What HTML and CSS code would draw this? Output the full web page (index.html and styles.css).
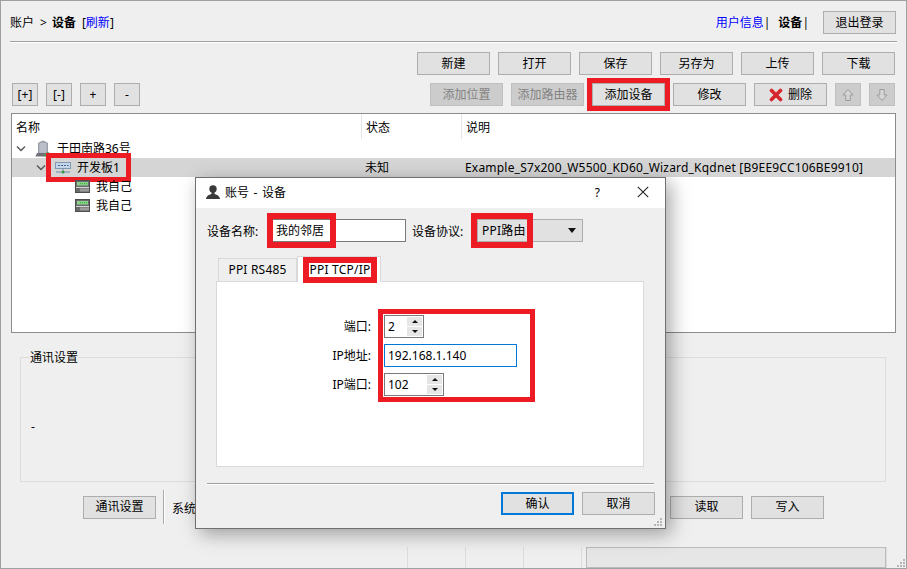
FILE: index.html
```html
<!DOCTYPE html>
<html lang="zh">
<head>
<meta charset="utf-8">
<title>账户 - 设备</title>
<link rel="stylesheet" href="styles.css">
</head>
<body>
<div class="window">
  <header class="header">
    <div class="crumbs"><span>账户</span><span>&gt;</span><b>设备</b><span>[<span class="link">刷新</span>]</span></div>
    <div class="user">
      <span class="nav"><span><span class="link">用户信息</span>|</span><span><b>设备</b>|</span></span>
      <button class="btn">退出登录</button>
    </div>
  </header>

  <div class="toolbar toolbar-end">
    <button class="btn">新建</button>
    <button class="btn">打开</button>
    <button class="btn">保存</button>
    <button class="btn">另存为</button>
    <button class="btn">上传</button>
    <button class="btn">下载</button>
  </div>

  <div class="toolbar toolbar-split">
    <div class="group-btns">
      <button class="btn small">[+]</button>
      <button class="btn small">[-]</button>
      <button class="btn small">+</button>
      <button class="btn small">-</button>
    </div>
    <div class="group-btns">
      <button class="btn off">添加位置</button>
      <button class="btn off">添加路由器</button>
      <button class="btn mark">添加设备</button>
      <button class="btn">修改</button>
      <button class="btn">
        <svg class="ico-x" width="14" height="14" viewBox="0 0 14 14"><path d="M2.500 2.500 L11.500 11.500 M11.500 2.500 L2.500 11.500" stroke="#d5262b" stroke-width="3.6" stroke-linecap="round"/></svg>删除</button>
      <button class="btn small off">
        <svg width="14" height="14" viewBox="0 0 14 14"><path d="M7 1.500 L12 7 H9.200 V12.500 H4.800 V7 H2 Z" fill="#d6d6d6" stroke="#9c9c9c"/></svg>
      </button>
      <button class="btn small off">
        <svg width="14" height="14" viewBox="0 0 14 14"><path d="M7 12.500 L12 7 H9.200 V1.500 H4.800 V7 H2 Z" fill="#d6d6d6" stroke="#9c9c9c"/></svg>
      </button>
    </div>
  </div>

  <section class="tree">
    <div class="tree-head">
      <div class="col-name">名称</div>
      <div class="col-state">状态</div>
      <div class="col-desc">说明</div>
    </div>
    <div class="tree-row">
      <div class="cell-name lvl0">
        <svg class="chev" width="12" height="8" viewBox="0 0 12 8"><path d="M2 1.500 L6 5.500 L10 1.500" fill="none" stroke="#555" stroke-width="1.400"/></svg>
        <svg class="ico" width="17" height="17" viewBox="0 0 17 17"><path d="M3.500 13 V3 L8 1 L12.500 3 V13 Z" fill="#a3a7b3" stroke="#83868f" stroke-width=".7"/><path d="M4.500 4 H11.500 M4.500 6 H11.500 M4.500 8 H11.500 M4.500 10 H11.500 M4.500 12 H11.500" stroke="#d4d7df"/><path d="M0.500 16.500 L2 13 H12 V16.500 Z" fill="#6f7177"/><path d="M9.500 16.500 V14 L13 12 L16.500 14 V16.500 Z" fill="#4da24d"/></svg>
        <span>于田南路36号</span>
      </div>
    </div>
    <div class="tree-row selected">
      <div class="cell-name lvl1">
        <svg class="chev" width="12" height="8" viewBox="0 0 12 8"><path d="M2 1.500 L6 5.500 L10 1.500" fill="none" stroke="#555" stroke-width="1.400"/></svg>
        <span class="tree-mark">
          <svg class="ico" width="16" height="13" viewBox="0 0 16 13"><rect x=".5" y="1.500" width="15" height="6" fill="#c5d6e8" stroke="#7f98b4"/><path d="M3 4.500 H5 M6 4.500 H8 M9 4.500 H11 M12 4.500 H13.500" stroke="#41668f" stroke-width="1.200"/><path d="M8 8 V11 M1 11 H15" stroke="#6d8aa8"/><circle cx="8" cy="11" r="1.500" fill="#3f9a45"/></svg>
          <span>开发板1</span>
        </span>
      </div>
      <div class="cell-state">未知</div>
      <div class="cell-desc">Example_S7x200_W5500_KD60_Wizard_Kqdnet [B9EE9CC106BE9910]</div>
    </div>
    <div class="tree-row">
      <div class="cell-name lvl2">
        <svg class="ico" width="15" height="13" viewBox="0 0 15 13"><rect x=".5" y=".5" width="14" height="12" fill="#6b6b6b" stroke="#4d4d4d"/><rect x="2" y="2" width="11" height="3.500" fill="#8fd28f"/><path d="M5 3.700 H13" stroke="#1fb61f" stroke-dasharray="1 1"/><rect x="1" y="7" width="13" height="1" fill="#d5d5d5"/><rect x="5" y="8.500" width="9" height="3" fill="#9a9a9a"/></svg>
        <span>我自己</span>
      </div>
    </div>
    <div class="tree-row">
      <div class="cell-name lvl2">
        <svg class="ico" width="15" height="13" viewBox="0 0 15 13"><rect x=".5" y=".5" width="14" height="12" fill="#6b6b6b" stroke="#4d4d4d"/><rect x="2" y="2" width="11" height="3.500" fill="#8fd28f"/><path d="M5 3.700 H13" stroke="#1fb61f" stroke-dasharray="1 1"/><rect x="1" y="7" width="13" height="1" fill="#d5d5d5"/><rect x="5" y="8.500" width="9" height="3" fill="#9a9a9a"/></svg>
        <span>我自己</span>
      </div>
    </div>
  </section>

  <fieldset class="comm">
    <legend>通讯设置</legend>
    <div class="comm-text">-</div>
  </fieldset>

  <div class="actions">
    <button class="btn">通讯设置</button>
    <span class="vline"></span>
    <span class="sys">系统</span>
    <div class="actions-right">
      <button class="btn">读取</button>
      <button class="btn">写入</button>
    </div>
  </div>

  <footer class="status">
    <span class="status-cell"></span>
    <span class="status-cell"></span>
    <span class="status-cell"></span>
    <span class="status-cell last"><span class="progress"></span></span>
    <svg class="grip" width="10" height="10" viewBox="0 0 10 10"><path d="M7 1h2v2h-2zM4 4h2v2h-2zM7 4h2v2h-2zM1 7h2v2h-2zM4 7h2v2h-2zM7 7h2v2h-2z" fill="#b5b5b5"/></svg>
  </footer>

  <div class="dialog">
    <div class="dlg-title">
      <svg class="dlg-ico" width="16" height="16" viewBox="0 0 16 16"><circle cx="8" cy="5" r="3.700" fill="#3a3a3a"/><path d="M6.500 8 V10 C4 11 1.500 11.500 1 15 H15 C14.500 11.500 12 11 9.500 10 V8 Z" fill="#3a3a3a"/></svg>
      <span class="dlg-name">账号 - 设备</span>
      <span class="dlg-help">?</span>
      <svg class="dlg-close" width="12" height="12" viewBox="0 0 12 12"><path d="M.8 .8 L11.200 11.200 M11.200 .8 L.8 11.200" stroke="#222" stroke-width="1.100"/></svg>
    </div>
    <div class="dlg-form">
      <label class="dlg-label">设备名称:</label>
      <span class="name-input"><span class="name-text">我的邻居</span></span>
      <label class="dlg-label proto">设备协议:</label>
      <span class="combo"><span class="combo-text latin">PPI路由</span><svg class="combo-arrow" width="8" height="5" viewBox="0 0 8 5"><path d="M0 0 H8 L4 5 Z" fill="#111"/></svg></span>
    </div>
    <div class="tabs">
      <span class="tab latin">PPI RS485</span>
      <span class="tab active"><span class="tab-mark latin">PPI TCP/IP</span></span>
    </div>
    <div class="pane">
      <div class="pane-labels">
        <span>端口:</span>
        <span>IP地址:</span>
        <span>IP端口:</span>
      </div>
      <div class="pane-fields">
        <span class="spin port"><span class="spin-val">2</span><span class="spin-btns"><i class="up"></i><i class="down"></i></span></span>
        <span class="ip">192.168.1.140</span>
        <span class="spin ipport"><span class="spin-val">102</span><span class="spin-btns"><i class="up"></i><i class="down"></i></span></span>
      </div>
    </div>
    <div class="dlg-sep"></div>
    <div class="dlg-actions">
      <button class="btn primary">确认</button>
      <button class="btn">取消</button>
    </div>
    <svg class="dlg-grip" width="9" height="9" viewBox="0 0 9 9"><path d="M6 0h2v2h-2zM3 3h2v2h-2zM6 3h2v2h-2zM0 6h2v2h-2zM3 6h2v2h-2zM6 6h2v2h-2z" fill="#b5b5b5"/></svg>
  </div>
</div>
</body>
</html>
```
FILE: styles.css
```css
* { box-sizing: border-box; }
html, body { margin: 0; padding: 0; }
body {
  width: 907px;
  height: 569px;
  overflow: hidden;
  font-family: "Noto Sans", "Noto Sans CJK SC", sans-serif;
  font-size: 12px;
  color: #000;
}
button { font: inherit; color: inherit; }
b { font-weight: 700; }
.link { color: #0000ff; }
.latin { letter-spacing: .2px; }

.window {
  position: relative;
  width: 907px;
  height: 569px;
  border: 1px solid #a0a0a0;
  background: #efefef;
  display: flex;
  flex-direction: column;
}

.btn {
  width: 73px;
  height: 23px;
  padding: 0;
  background: #e1e1e1;
  border: 1px solid #adadad;
  display: inline-flex;
  align-items: center;
  justify-content: center;
  line-height: 1;
}
.btn.small { width: 26px; }
.btn.off { background: #cccccc; border-color: #bfbfbf; color: #838383; }
.btn.mark { outline: 5px solid #ed1c24; }
.btn.primary { border: 2px solid #0078d7; }
.ico-x { margin-right: 5px; }

.header {
  height: 41px;
  margin: 0 9px;
  padding: 10px 1px 0 0;
  display: flex;
  justify-content: space-between;
  border-bottom: 1px solid #a0a0a0;
  box-shadow: 0 1px 0 #fff;
}
.crumbs { line-height: 23px; display: flex; gap: 6px; }
.crumbs b { margin-left: -1px; }
.user { display: flex; }
.nav { line-height: 23px; margin-right: 14px; display: flex; gap: 8px; }

.toolbar { display: flex; margin: 10px 11px 0 11px; }
.toolbar-end { justify-content: flex-end; gap: 8px; }
.toolbar-split { justify-content: space-between; margin-top: 8px; }
.group-btns { display: flex; gap: 8px; }

.tree {
  height: 220px;
  margin: 7px 10px 0 10px;
  border: 1px solid #8c8c8c;
  background: #fff;
}
.tree-head { display: flex; height: 25px; line-height: 27px; }
.col-name { width: 350px; padding-left: 4px; border-right: 1px solid #e5e5e5; }
.col-state { width: 100px; padding-left: 4px; border-right: 1px solid #e5e5e5; }
.col-desc { padding-left: 4px; }
.tree-row { display: flex; height: 19px; line-height: 19px; white-space: nowrap; }
.tree-row.selected { background: #d5d5d5; }
.cell-name { width: 350px; display: flex; align-items: center; padding-left: 3px; }
.cell-state { width: 100px; padding-left: 3px; }
.cell-desc { padding-left: 3px; letter-spacing: .2px; }
.lvl1 { padding-left: 23px; }
.lvl2 { padding-left: 63px; }
.chev { margin-right: 4px; flex: none; }
.ico { flex: none; margin-right: 6px; }
.lvl0 .chev { margin-right: 8px; }
.lvl0 .ico { margin-right: 5px; }
.tree-mark {
  display: flex;
  align-items: center;
  width: 75px;
  height: 19px;
  padding-left: 4px;
  outline: 5px solid #ed1c24;
}

.comm {
  height: 133px;
  margin: 16px 20px 0 19px;
  padding: 0 10px;
  border: 1px solid #dcdcdc;
  min-inline-size: 0;
}
.comm legend { padding: 0; margin-left: -1px; line-height: 17px; }
.comm-text { margin-top: 52px; }

.actions {
  height: 34px;
  margin-top: 8px;
  padding: 0 82px;
  display: flex;
  align-items: center;
}
.vline { width: 1px; height: 34px; margin: 0 8px 0 7px; background: #a8a8a8; box-shadow: 1px 0 0 #fff; }
.sys { line-height: 23px; margin-top: 2px; }
.actions-right { margin-left: auto; display: flex; gap: 8px; }

.status {
  margin-top: auto;
  height: 23px;
  display: flex;
  justify-content: flex-end;
  align-items: flex-end;
}
.status-cell { width: 58px; height: 21px; border-left: 1px solid #dcdcdc; }
.status-cell.last {
  width: 306px;
  border-right: 1px solid #dcdcdc;
  padding: 0 0 0 4px;
  margin-right: 9px;
}
.progress { display: block; width: 300px; height: 21px; background: #e6e6e6; border: 1px solid #bcbcbc; }
.grip { flex: none; }

.dialog {
  position: absolute;
  left: 194px;
  top: 176px;
  width: 471px;
  height: 352px;
  border: 1px solid #707070;
  background: #efefef;
  box-shadow: 5px 5px 18px rgba(0, 0, 0, .35);
  display: flex;
  flex-direction: column;
}
.dlg-title { height: 30px; padding: 0 0 2px 9px; background: #fff; display: flex; align-items: center; flex: none; }
.dlg-ico { margin-right: 4px; }
.dlg-name { flex: 1; word-spacing: 1.500px; }
.dlg-help { margin-right: 37px; }
.dlg-close { margin-right: 16px; }

.dlg-form { display: flex; align-items: center; height: 23px; margin: 11px 0 0 11px; flex: none; }
.dlg-label { width: 65px; }
.dlg-label.proto { margin-left: 6px; }
.name-input {
  width: 134px;
  height: 23px;
  background: #fff;
  border: 1px solid #7a7a7a;
}
.name-text { display: block; width: 57px; height: 23px; margin: -1px 0 0 0; padding-left: 3px; line-height: 23px; outline: 6px solid #ed1c24; }
.combo {
  width: 106px;
  height: 23px;
  background: #e1e1e1;
  border: 1px solid #adadad;
  display: flex;
  align-items: center;
  justify-content: space-between;
  padding-right: 6px;
}
.combo-text { display: block; width: 50px; height: 23px; margin: 0 0 0 -1px; padding-left: 5px; line-height: 23px; outline: 6px solid #ed1c24; }

.tabs { display: flex; align-items: flex-end; height: 24px; margin: 15px 0 0 22px; flex: none; }
.tab {
  width: 79px;
  height: 23px;
  line-height: 22px;
  text-align: center;
  border: 1px solid #d9d9d9;
  border-bottom: 0;
}
.tab.active {
  width: 84px;
  height: 26px;
  margin-bottom: -1px;
  background: #fff;
  padding: 6px 0 0 11px;
  position: relative;
}
.tab-mark { display: block; width: 62px; height: 14px; line-height: 14px; text-align: center; outline: 6px solid #ed1c24; }

.pane {
  width: 428px;
  height: 186px;
  margin-left: 20px;
  padding: 33px 0 0;
  background: #fff;
  border: 1px solid #d9d9d9;
  display: flex;
  align-items: flex-start;
  flex: none;
}
.pane-labels {
  width: 154px;
  margin-right: 12px;
  display: flex;
  flex-direction: column;
  gap: 6px;
  text-align: right;
}
.pane-labels span { height: 23px; line-height: 23px; }
.pane-fields {
  width: 147px;
  height: 83px;
  margin-top: -1px;
  padding: 1px;
  display: flex;
  flex-direction: column;
  align-items: flex-start;
  gap: 6px;
  outline: 5px solid #ed1c24;
}
.spin, .ip { height: 23px; line-height: 21px; padding-left: 3px; background: #fff; border: 1px solid #7a7a7a; display: flex; justify-content: space-between; align-items: center; }
.spin.port { width: 40px; }
.spin.ipport { width: 60px; }
.ip { width: 133px; border-color: #0078d7; }
.spin-btns { width: 15px; height: 19px; margin-right: 1px; display: flex; flex-direction: column; gap: 1px; }
.spin-btns i { display: flex; flex: 1; align-items: center; justify-content: center; background: #e6e6e6; }
.spin-btns i::before { content: ""; border-left: 3px solid transparent; border-right: 3px solid transparent; }
.spin-btns .up::before { border-bottom: 3px solid #111; }
.spin-btns .down::before { border-top: 3px solid #111; }

.dlg-sep { height: 1px; margin: 16px 11px 0 11px; background: #a0a0a0; box-shadow: 0 1px 0 #fff; flex: none; }
.dlg-actions { display: flex; justify-content: flex-end; gap: 8px; margin: 8px 10px 0 0; flex: none; }
.dlg-grip { position: absolute; right: 2px; bottom: 1px; }
```
